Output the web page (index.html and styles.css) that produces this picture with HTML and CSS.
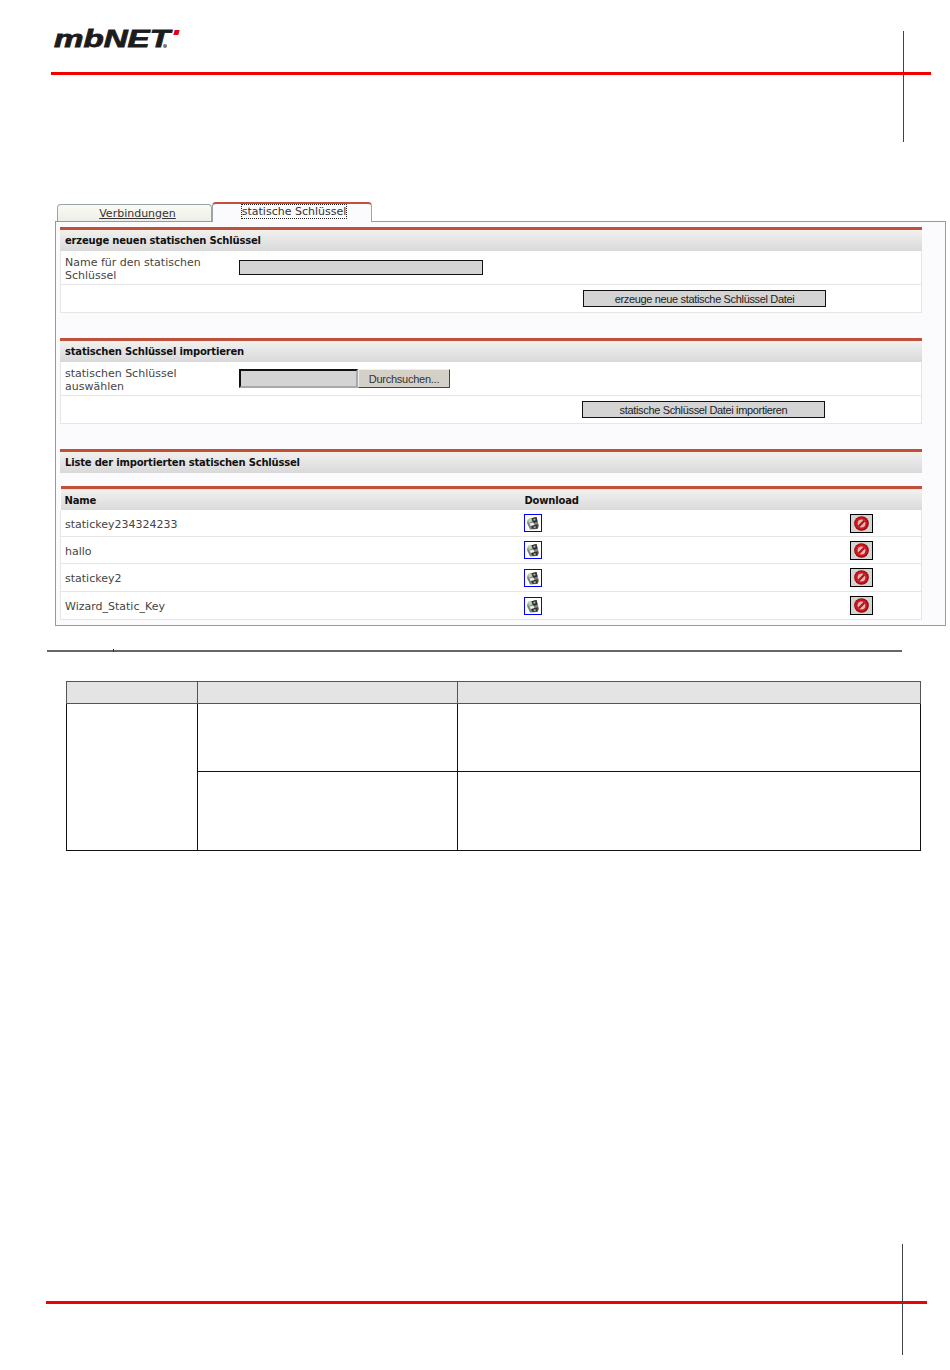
FILE: index.html
```html
<!DOCTYPE html>
<html lang="de">
<head>
  <meta charset="UTF-8">
  <title>mbNET statische Schlüssel</title>
  <link rel="stylesheet" href="styles.css">
</head>
<body>
  <div class="page">
    <div class="head">
      <div class="logo"><span class="logo-text">mbNET</span><span class="logo-r"></span><span class="logo-dot"></span></div>
      <div class="red-line"></div>
      <div class="crop-top"></div>
    </div>

    <div class="tabs">
      <a class="tab" href="#">Verbindungen</a>
      <a class="tab active" href="#"><span class="focus">statische Schlüssel</span></a>
    </div>

    <div class="panel">
      <div class="section">
        <div class="sec-title">erzeuge neuen statischen Schlüssel</div>
        <div class="row row-form">
          <div class="lbl">Name für den statischen Schlüssel</div>
          <input class="field" type="text">
        </div>
        <div class="row row-btn">
          <button class="btn btn-a">erzeuge neue statische Schlüssel Datei</button>
        </div>
      </div>

      <div class="section">
        <div class="sec-title">statischen Schlüssel importieren</div>
        <div class="row row-form">
          <div class="lbl">statischen Schlüssel auswählen</div>
          <div class="file-box"></div>
          <button class="browse">Durchsuchen...</button>
        </div>
        <div class="row row-btn">
          <button class="btn btn-b">statische Schlüssel Datei importieren</button>
        </div>
      </div>

      <div class="section sec-list">
        <div class="sec-title">Liste der importierten statischen Schlüssel</div>
      </div>

      <table class="keys">
        <thead>
          <tr><th class="c-name">Name</th><th class="c-dl">Download</th><th></th></tr>
        </thead>
        <tbody>
          <tr>
            <td>statickey234324233</td>
            <td><a class="dl" href="#"><svg width="14" height="14" viewBox="0 0 14 14"><use href="#floppy"/></svg></a></td>
            <td><button class="del"><svg width="15" height="15" viewBox="0 0 17 17"><use href="#stop"/></svg></button></td>
          </tr>
          <tr>
            <td>hallo</td>
            <td><a class="dl" href="#"><svg width="14" height="14" viewBox="0 0 14 14"><use href="#floppy"/></svg></a></td>
            <td><button class="del"><svg width="15" height="15" viewBox="0 0 17 17"><use href="#stop"/></svg></button></td>
          </tr>
          <tr class="row-tall">
            <td>statickey2</td>
            <td><a class="dl" href="#"><svg width="14" height="14" viewBox="0 0 14 14"><use href="#floppy"/></svg></a></td>
            <td><button class="del"><svg width="15" height="15" viewBox="0 0 17 17"><use href="#stop"/></svg></button></td>
          </tr>
          <tr class="row-tall">
            <td>Wizard_Static_Key</td>
            <td><a class="dl" href="#"><svg width="14" height="14" viewBox="0 0 14 14"><use href="#floppy"/></svg></a></td>
            <td><button class="del"><svg width="15" height="15" viewBox="0 0 17 17"><use href="#stop"/></svg></button></td>
          </tr>
        </tbody>
      </table>
    </div>

    <div class="rule"><span class="tick"></span></div>

    <table class="doc">
      <tr class="doc-head"><th class="d1"></th><th class="d2"></th><th></th></tr>
      <tr class="doc-r1"><td rowspan="2"></td><td></td><td></td></tr>
      <tr class="doc-r2"><td></td><td></td></tr>
    </table>

    <div class="foot">
      <div class="red-line red-foot"></div>
      <div class="crop-foot"></div>
    </div>
  </div>

  <svg class="defs" width="0" height="0">
    <defs>
      <g id="floppy">
        <path d="M2 3 L10.5 1 L13 10 L11.5 13 L4 13.5 L1 7 Z" fill="#7f8480"/>
        <path d="M2 3 L5.5 2.2 L6 5.5 L2.8 7 Z" fill="#bcd6ac"/>
        <path d="M5.5 2.2 L10.5 1 L11.5 5.5 L7.5 7 Z" fill="#2a2d2c"/>
        <path d="M7.2 3 L9.2 2.5 L9.6 4.2 L7.8 4.8 Z" fill="#b5b5b5"/>
        <path d="M3.4 7.6 L7.5 6.6 L8.4 9.6 L4.8 10.2 Z" fill="#eceeec"/>
        <path d="M5 10 L11.8 8.2 L11.5 12.5 L6.5 13 Z" fill="#333635"/>
        <path d="M7.5 10.6 L9.6 10.2 L9.8 12 L7.9 12.3 Z" fill="#a9aca9"/>
      </g>
      <g id="stop">
        <circle cx="8.5" cy="8.5" r="8.3" fill="#8e0a0e"/>
        <circle cx="8.2" cy="8.2" r="7.2" fill="#cf161a"/>
        <circle cx="8.5" cy="8.5" r="4.4" fill="#e8b4b4"/>
        <path d="M4.4 11 L11 4.2 L12.8 5.9 L6.2 12.8 Z" fill="#b81218"/>
      </g>
    </defs>
  </svg>
</body>
</html>
```

FILE: styles.css
```css
html, body {
  margin: 0;
  padding: 0;
  background: #fff;
}

.page {
  width: 950px;
  height: 1370px;
  overflow: hidden;
  position: relative;
  font-family: "DejaVu Sans", sans-serif;
  font-size: 11px;
  color: #333;
}

/* page header */
.head {
  position: relative;
  height: 203px;
}

.logo {
  height: 50px;
  position: relative;
}

.logo-text {
  position: absolute;
  left: 54px;
  top: 26px;
  font-family: "Liberation Sans", sans-serif;
  font-size: 24px;
  line-height: 26px;
  font-weight: bold;
  font-style: italic;
  color: #1c1c1c;
  -webkit-text-stroke: 0.8px #1c1c1c;
  transform: scaleX(1.38);
  transform-origin: left center;
}

.logo-r {
  position: absolute;
  left: 174px;
  top: 30px;
  width: 5px;
  height: 5px;
  background: #e2001a;
  transform: skewX(-15deg);
}

.logo-dot {
  position: absolute;
  left: 163px;
  top: 44px;
  width: 4px;
  height: 4px;
  border-radius: 50%;
  background: #777;
}

.red-line {
  margin: 22px 0 0 51px;
  width: 880px;
  height: 3px;
  background: #f00000;
}

.crop-top {
  position: absolute;
  left: 903px;
  top: 31px;
  width: 1px;
  height: 111px;
  background: #444;
}

/* tabs */
.tabs {
  display: flex;
  align-items: flex-end;
  height: 18px;
  margin-left: 57px;
  position: relative;
  z-index: 1;
}

.tab {
  box-sizing: border-box;
  width: 155px;
  height: 17px;
  padding-left: 6px;
  text-align: center;
  line-height: 18px;
  color: #333;
  background: linear-gradient(#fbfbf5, #eeeee8);
  border: 1px solid #9aa5a5;
  border-bottom: none;
  border-radius: 4px 4px 0 0;
}

.tab.active {
  width: 160px;
  height: 20px;
  margin-bottom: -1px;
  padding-left: 4px;
  background: #fbfbfe;
  border-top: 2px solid #c0503c;
  line-height: 15px;
}

.focus {
  display: inline-block;
  outline: 1px dotted #222;
  outline-offset: 0;
  line-height: 13px;
}

.panel {
  box-sizing: border-box;
  width: 891px;
  height: 405px;
  margin-left: 55px;
  padding: 5px 23px 0 4px;
  background: #fbfbfe;
  border: 1px solid #999;
}

.section {
  margin-bottom: 25px;
  background: #fff;
}

.sec-title {
  box-sizing: border-box;
  height: 24px;
  padding: 1px 0 0 5px;
  line-height: 20px;
  font-size: 10px;
  font-weight: bold;
  letter-spacing: -0.19px;
  color: #111;
  border-top: 3px solid #c0503c;
  background: linear-gradient(#f3f1e6, #ececec 20%, #d9d9d9);
}

.row {
  box-sizing: border-box;
  border: 1px solid #e6e6e6;
  border-top: none;
}

.row-form {
  display: flex;
  align-items: center;
  height: 34px;
  padding-left: 4px;
}

.lbl {
  box-sizing: border-box;
  width: 174px;
  padding: 2px 30px 0 0;
  line-height: 13px;
  color: #444;
}

.field {
  box-sizing: border-box;
  width: 244px;
  height: 15px;
  margin: 0;
  background: #d4d4d4;
  border: 1px solid #111;
}

.file-box {
  box-sizing: border-box;
  width: 119px;
  height: 19px;
  background: #d4d4d4;
  border: 2px solid #a8a8a8;
  border-top-color: #111;
  border-left-color: #111;
}

.browse {
  box-sizing: border-box;
  width: 92px;
  height: 19px;
  padding: 0;
  font-family: "Liberation Sans", sans-serif;
  font-size: 11px;
  letter-spacing: -0.25px;
  color: #333;
  background: #d4d0c8;
  border: 1px solid;
  border-color: #eee #444 #444 #eee;
}

.row-btn {
  display: flex;
  align-items: center;
  height: 28px;
}

.btn {
  box-sizing: border-box;
  width: 243px;
  height: 17px;
  padding: 0;
  font-family: "Liberation Sans", sans-serif;
  font-size: 11px;
  letter-spacing: -0.34px;
  color: #222;
  background: #d4d4d4;
  border: 1px solid #111;
}

.btn-a {
  margin-left: 522px;
}

.btn-b {
  margin-left: 521px;
}

.sec-list {
  height: 24px;
  margin-bottom: 13px;
}

/* key list */
.keys {
  width: 100%;
  border-collapse: collapse;
  table-layout: fixed;
  background: #fff;
}

.keys th {
  height: 20px;
  padding: 1px 0 0 4px;
  text-align: left;
  font-size: 10px;
  font-weight: bold;
  letter-spacing: -0.19px;
  color: #111;
  border-top: 3px solid #c0503c;
  background: linear-gradient(#f3f1e6, #ececec 20%, #d9d9d9);
}

.c-name {
  width: 456px;
}

.c-dl {
  width: 321px;
}

.keys td {
  height: 26px;
  padding: 0 0 0 4px;
  border: 1px solid #e6e6e6;
  border-width: 0 0 1px 0;
  color: #444;
}

.row-tall td {
  height: 27px;
}

.keys td:first-child {
  border-left-width: 1px;
  padding-top: 2px;
  height: 24px;
}

.keys .row-tall td:first-child {
  height: 25px;
}

.keys td:last-child {
  border-right-width: 1px;
}

.dl {
  display: inline-flex;
  align-items: center;
  justify-content: center;
  box-sizing: border-box;
  width: 18px;
  height: 18px;
  margin-left: -1px;
  border: 1px solid #0000ff;
  vertical-align: middle;
}

.del {
  display: inline-flex;
  align-items: center;
  justify-content: center;
  box-sizing: border-box;
  width: 23px;
  height: 19px;
  padding: 0;
  background: #d4d4d4;
  border: 1px solid #000;
  vertical-align: middle;
}

.defs {
  position: absolute;
}

/* lower part of the document */
.rule {
  position: relative;
  width: 855px;
  height: 2px;
  margin: 24px 0 0 47px;
  background: #666;
}

.tick {
  position: absolute;
  left: 66px;
  top: -1px;
  width: 1px;
  height: 3px;
  background: #333;
}

.doc {
  width: 855px;
  height: 169px;
  margin: 29px 0 0 66px;
  border-collapse: collapse;
  table-layout: fixed;
}

.doc th, .doc td {
  padding: 0;
  border: 1px solid #111;
}

.doc th {
  background: #e4e4e4;
  border-color: #555;
}

.d1 {
  width: 130px;
}

.d2 {
  width: 259px;
}

.doc-head {
  height: 22px;
}

.doc-r1 {
  height: 68px;
}

.doc-r2 {
  height: 79px;
}

.foot {
  position: absolute;
  left: 0;
  top: 1244px;
  width: 100%;
  height: 112px;
}

.red-foot {
  margin: 57px 0 0 46px;
  width: 881px;
}

.crop-foot {
  position: absolute;
  left: 902px;
  top: 0;
  width: 1px;
  height: 111px;
  background: #444;
}
```
